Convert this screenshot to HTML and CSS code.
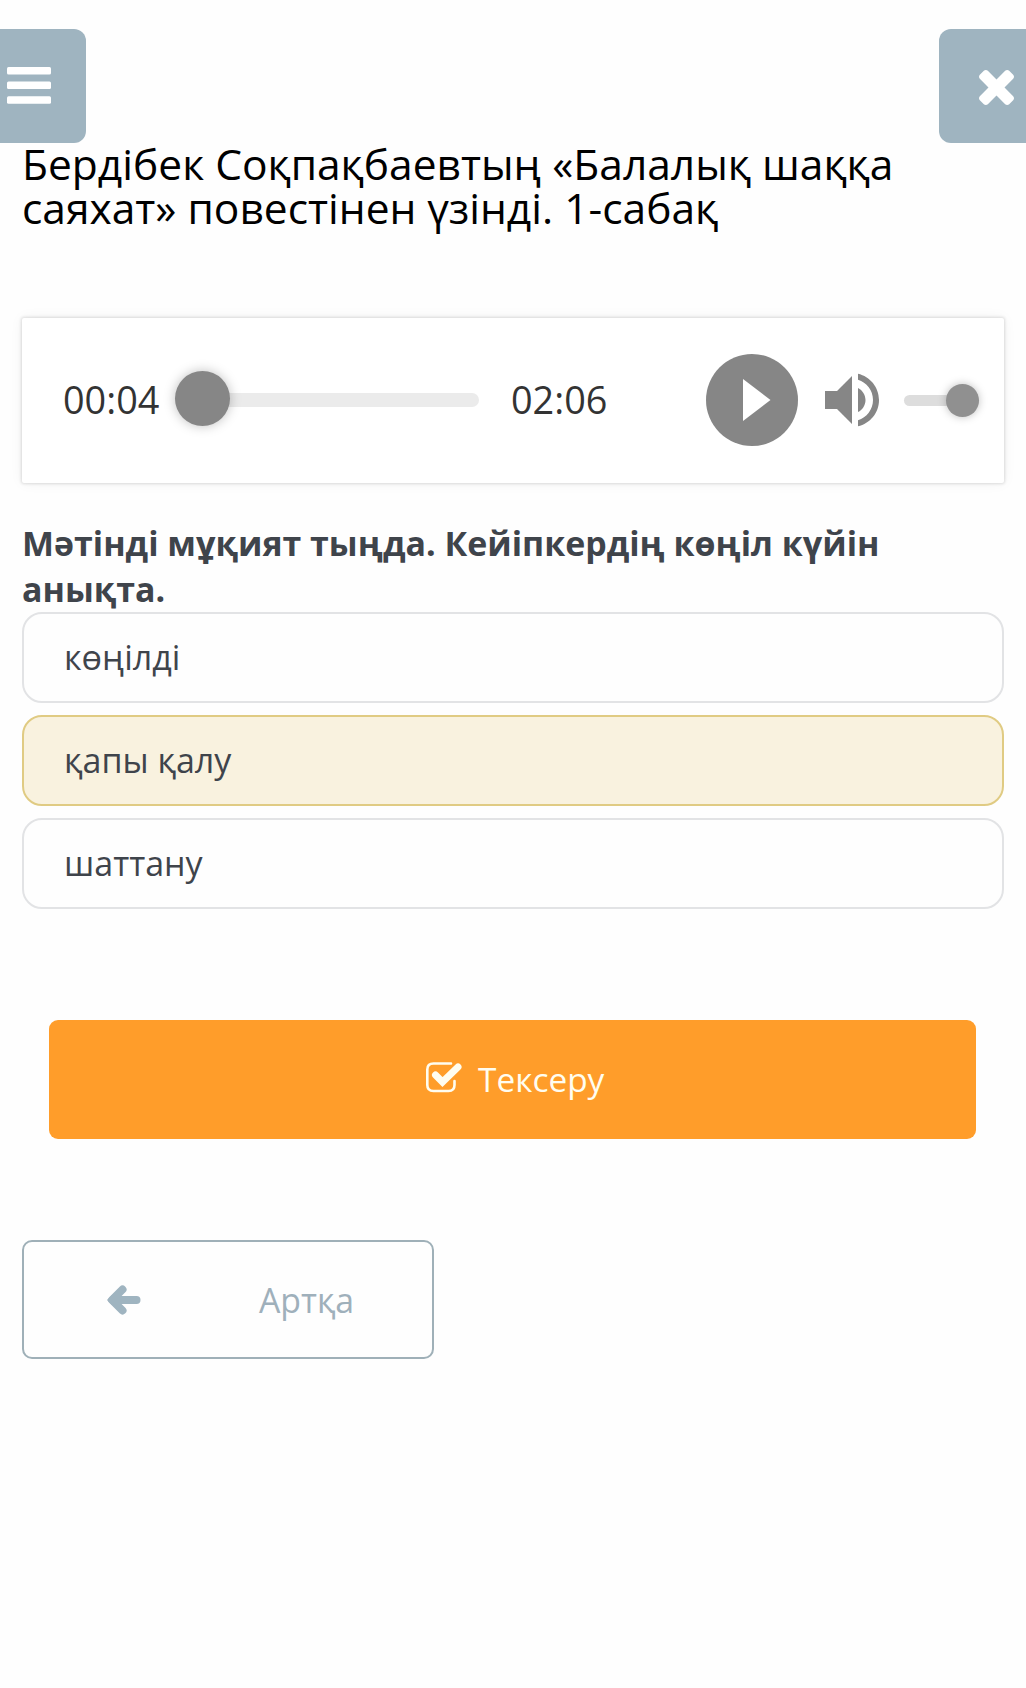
FILE: index.html
```html
<!DOCTYPE html>
<html lang="kk">
<head>
<meta charset="utf-8">
<title>1-сабақ</title>
<link rel="stylesheet" href="styles.css">
</head>
<body>
<header class="topbar">
  <button class="tab tab-menu" aria-label="Мәзір">
    <svg width="44" height="37" viewBox="0 0 44 37" fill="#fff"><rect width="44" height="7.5" rx="1.5"/><rect y="14.5" width="44" height="7.5" rx="1.5"/><rect y="29.2" width="44" height="7.5" rx="1.5"/></svg>
  </button>
  <button class="tab tab-close" aria-label="Жабу">
    <svg width="35" height="35" viewBox="110 366 1188 1188"><path fill="#fff" d="M1298 1322q0 40-28 68l-136 136q-28 28-68 28t-68-28l-294-294-294 294q-28 28-68 28t-68-28l-136-136q-28-28-28-68t28-68l294-294-294-294q-28-28-28-68t28-68l136-136q28-28 68-28t68 28l294 294 294-294q28-28 68-28t68 28l136 136q28 28 28 68t-28 68l-294 294 294 294q28 28 28 68z"/></svg>
  </button>
</header>
<main class="lesson">
  <h1 class="title">Бердібек Соқпақбаевтың «Балалық шаққа саяхат» повестінен үзінді. 1-сабақ</h1>

  <section class="player">
    <span class="time">00:04</span>
    <div class="seek"><div class="seek-knob"></div></div>
    <span class="time time-total">02:06</span>
    <button class="play" aria-label="Ойнату">
      <svg width="92" height="92" viewBox="0 0 92 92"><circle cx="46" cy="46" r="46" fill="#868686"/><path d="M37 25v42l27.500-21z" fill="#fff"/></svg>
    </button>
    <svg class="speaker" width="72" height="72" viewBox="0 0 24 24" fill="#868686"><path d="M3 9v6h4l5 5V4L7 9H3zm13.500 3c0-1.770-1.020-3.290-2.500-4.030v8.050c1.480-.73 2.500-2.250 2.500-4.020zM14 3.230v2.060c2.890.86 5 3.540 5 6.710s-2.110 5.850-5 6.710v2.060c4.010-.91 7-4.490 7-8.770s-2.990-7.860-7-8.770z"/></svg>
    <div class="volume"><div class="volume-knob"></div></div>
  </section>

  <h2 class="question">Мәтінді мұқият тыңда. Кейіпкердің көңіл күйін анықта.</h2>
  <ul class="options">
    <li class="option">көңілді</li>
    <li class="option option-selected">қапы қалу</li>
    <li class="option">шаттану</li>
  </ul>

  <button class="check">
    <svg class="check-icon" width="36" height="31" viewBox="0 0 36 31" fill="none" stroke="#fffdf0" stroke-linecap="round" stroke-linejoin="round"><path stroke-width="2.600" d="M25 1.500H7.500Q1.300 1.500 1.300 7.500V23Q1.300 29 7.500 29H22.500Q28.500 29 28.500 23V19"/><path stroke-width="7" stroke-linejoin="miter" d="M9.500 13L16.500 20L32 5"/></svg>
    <span>Тексеру</span>
  </button>

  <button class="back">
    <svg width="34" height="30" viewBox="0 0 34 30" fill="#9fb4c0" stroke="#9fb4c0" stroke-width="8" stroke-linecap="round" stroke-linejoin="round"><path d="M15.500 4.500L5 15L15.500 25.500M10 15H29.500" fill="none"/><path stroke="none" d="M0 15L5 10V20z"/></svg>
    <span>Артқа</span>
  </button>
</main>
</body>
</html>
```
FILE: styles.css
```css
* { box-sizing: border-box; }
body {
  margin: 0;
  min-height: 1688px;
  background: #fefefe;
  font-family: "Open Sans", "Noto Sans", sans-serif;
  color: #3f444b;
}
button { border: 0; padding: 0; font: inherit; background: none; }
svg { display: block; flex: none; }

.topbar {
  display: flex;
  justify-content: space-between;
  padding-top: 29px;
}
.tab {
  display: flex;
  height: 114px;
  background: #9fb4c0;
}
.tab-menu { width: 86px; padding: 38px 0 0 7px; border-radius: 0 12px 12px 0; }
.tab-close { width: 87px; padding: 41px 0 0 40px; border-radius: 12px 0 0 12px; }

.lesson {
  display: flex;
  flex-direction: column;
  padding: 0 22px;
}
.title {
  margin: -1px 0 0;
  font-size: 42.500px;
  line-height: 44px;
  font-weight: 400;
  color: #000;
}

.player {
  display: flex;
  align-items: center;
  height: 165px;
  margin-top: 88px;
  padding: 0 25px 1px 41px;
  background: #fff;
  border-radius: 2px;
  box-shadow: 0 0 3px 1px rgba(0, 0, 0, .12), 0 0 14px rgba(0, 0, 0, .05);
}
.time { width: 112px; font-size: 37.800px; line-height: 52px; color: #333; }
.seek {
  display: flex;
  align-items: center;
  width: 304px;
  height: 14px;
  border-radius: 7px;
  background: #ebebeb;
}
.seek-knob {
  width: 55px;
  height: 55px;
  margin-top: -3px;
  flex: none;
  border-radius: 50%;
  background: #868686;
  box-shadow: 0 0 12px rgba(0, 0, 0, .25);
}
.time-total { width: 195px; margin-left: 32px; }
.speaker { margin-left: 18px; }
.volume {
  display: flex;
  align-items: center;
  justify-content: flex-end;
  width: 75px;
  height: 11px;
  margin-left: 16px;
  border-radius: 6px;
  background: #ddd;
}
.volume-knob {
  width: 33px;
  height: 33px;
  flex: none;
  border-radius: 50%;
  background: #909090;
  box-shadow: 0 0 9px rgba(0, 0, 0, .25);
}

.question {
  margin: 37px 0 0;
  font-size: 33.940px;
  line-height: 46px;
  font-weight: 700;
}
.options {
  display: flex;
  flex-direction: column;
  gap: 12px;
  margin: 0;
  padding: 0;
  list-style: none;
}
.option {
  height: 91px;
  padding-left: 40px;
  border: 2px solid #e2e3e5;
  border-radius: 20px;
  font-size: 34px;
  line-height: 87px;
}
.option-selected { background: #f9f2df; border-color: #e0cb83; }

.check {
  display: flex;
  align-items: center;
  gap: 16px;
  height: 119px;
  margin: 111px 28px 0 27px;
  padding: 0 0 2px 377px;
  border-radius: 9px;
  background: #ff9d2a;
  color: #fffdf0;
  font-size: 33.400px;
}
.check-icon { margin-bottom: 3px; }
.back {
  display: flex;
  align-items: center;
  gap: 118px;
  width: 412px;
  height: 119px;
  margin-top: 101px;
  padding-left: 83px;
  border: 2px solid #9fb0b8;
  border-radius: 10px;
  color: #9fb0bb;
  font-size: 33.800px;
}
```
